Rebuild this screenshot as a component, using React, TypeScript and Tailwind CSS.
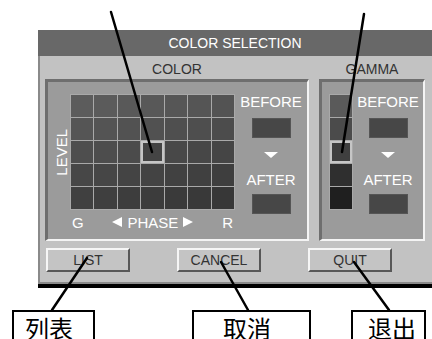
import React from 'react';

const ROWS = 5;
const COLS = 7;
const GAMMA_SHADES = ['#5a5a5a', '#4b4b4b', '#3f3f3f', '#2f2f2f', '#1f1f1f'];

// darker toward the bottom, a touch darker to the right
const cellShade = (r: number, c: number) => {
  const v = Math.round(0x5c - r * 7 - c * 1.5);
  return `rgb(${v},${v},${v})`;
};

function ValueColumn() {
  return (
    <div className="flex flex-col items-center pt-[11px] text-white text-[15px] leading-[17px]">
      <div className="h-[17px]">BEFORE</div>
      <div className="mt-[8px] w-[39px] h-[20px] bg-[#474747] border border-[#555]" />
      <div className="mt-[14px] w-0 h-0 border-x-[7px] border-x-transparent border-t-[6px] border-t-white" />
      <div className="mt-[13px] h-[17px]">AFTER</div>
      <div className="mt-[6px] w-[39px] h-[20px] bg-[#474747] border border-[#555]" />
    </div>
  );
}

function Button({ label }: { label: string }) {
  return (
    <div className="w-[84px] h-[24px] flex items-center justify-center bg-[#c4c4c4] border-2 border-t-[#f6f6f6] border-l-[#f6f6f6] border-b-[#575757] border-r-[#575757] text-[#333] text-[14px]">
      {label}
    </div>
  );
}

function Callout({ text, className }: { text: string; className: string }) {
  return (
    <div
      className={`h-[40px] border-2 border-b-0 border-black pt-[4px] text-black text-[24px] leading-none font-['Noto_Sans_CJK_SC',sans-serif] ${className}`}
    >
      {text}
    </div>
  );
}

export default function App() {
  return (
    <div className="relative w-[432px] h-[339px] overflow-hidden bg-white font-['Liberation_Sans',Arial,sans-serif]">
      <div className="ml-[38px] mt-[30px] w-[394px]">
        <div className="h-[26px] bg-[#686868] flex items-center justify-center text-white text-[14px]">
          COLOR SELECTION
        </div>
        <div className="h-[226px] bg-[#c2c2c2] border-l-2 border-[#8a8a8a]">
          <div className="flex pl-[5px] gap-[10px]">
            {/* colour panel */}
            <div className="w-[264px] flex flex-col">
              <div className="h-[23px] flex items-center justify-center pt-[3px] text-[#333] text-[14px]">COLOR</div>
              <div className="h-[162px] bg-[#9b9b9b] border-t-[3px] border-l-[3px] border-[#6e6e6e] border-r-2 border-b-2 border-r-[#f4f4f4] border-b-[#f4f4f4] flex">
                <div className="flex flex-col">
                  <div className="flex pt-[12px]">
                    <div className="w-[22px] h-[116px] flex items-center justify-center pl-[5px]">
                      <span className="[writing-mode:vertical-rl] rotate-180 text-white text-[15px] leading-none">LEVEL</span>
                    </div>
                    <div className="w-[165px] h-[116px] grid grid-cols-7 grid-rows-5 gap-px p-px bg-[#a9a9a9]">
                      {Array.from({ length: ROWS * COLS }, (_, i) => {
                        const r = Math.floor(i / COLS);
                        const c = i % COLS;
                        const picked = r === 2 && c === 3;
                        return (
                          <div
                            key={i}
                            className={picked ? 'shadow-[inset_0_0_0_2px_#c6c6c6]' : ''}
                            style={{ backgroundColor: picked ? '#444' : cellShade(r, c) }}
                          />
                        );
                      })}
                    </div>
                  </div>
                  <div className="ml-[22px] w-[165px] h-[24px] px-[2px] flex items-center justify-between text-white text-[15px] leading-none">
                    <span>G</span>
                    <div className="flex items-center gap-[5px]">
                      <div className="w-0 h-0 border-y-[5px] border-y-transparent border-r-[10px] border-r-white" />
                      <span>PHASE</span>
                      <div className="w-0 h-0 border-y-[5px] border-y-transparent border-l-[10px] border-l-white" />
                    </div>
                    <span>R</span>
                  </div>
                </div>
                <div className="flex-1">
                  <ValueColumn />
                </div>
              </div>
            </div>
            {/* gamma panel */}
            <div className="w-[106px] flex flex-col">
              <div className="h-[23px] flex items-center justify-center pt-[3px] text-[#333] text-[14px]">GAMMA</div>
              <div className="h-[162px] bg-[#9b9b9b] border-t-[3px] border-l-[3px] border-[#6e6e6e] border-r-2 border-b-2 border-r-[#f4f4f4] border-b-[#f4f4f4] flex">
                <div className="pl-[7px] pt-[12px]">
                  <div className="w-[24px] h-[116px] grid grid-rows-5 gap-px p-px bg-[#a9a9a9]">
                    {GAMMA_SHADES.map((shade, i) => (
                      <div
                        key={i}
                        className={i === 2 ? 'shadow-[inset_0_0_0_2px_#c6c6c6]' : ''}
                        style={{ backgroundColor: shade }}
                      />
                    ))}
                  </div>
                </div>
                <div className="flex-1">
                  <ValueColumn />
                </div>
              </div>
            </div>
          </div>
          <div className="flex pl-[6px] gap-[47px] mt-[7px]">
            <Button label="LIST" />
            <Button label="CANCEL" />
            <Button label="QUIT" />
          </div>
        </div>
        <div className="h-[2px] bg-[#8a8a8a]" />
        <div className="h-[4px] bg-black" />
      </div>

      <div className="flex mt-[22px]">
        <Callout text="列表" className="ml-[12px] w-[83px] pl-[11px]" />
        <Callout text="取消" className="ml-[97px] w-[119px] pl-[29px]" />
        <Callout text="退出" className="ml-[40px] w-[75px] pl-[15px]" />
      </div>

      {/* leader lines */}
      <svg className="absolute top-0 left-0 pointer-events-none" width="432" height="339" viewBox="0 0 432 339">
        <g stroke="#000" strokeWidth="2.5" strokeLinecap="round">
          <line x1="111" y1="12" x2="152" y2="152" />
          <line x1="364" y1="14" x2="342" y2="152" />
          <line x1="87" y1="258" x2="52" y2="310" />
          <line x1="221" y1="262" x2="248" y2="310" />
          <line x1="354" y1="262" x2="389" y2="310" />
        </g>
      </svg>
    </div>
  );
}
